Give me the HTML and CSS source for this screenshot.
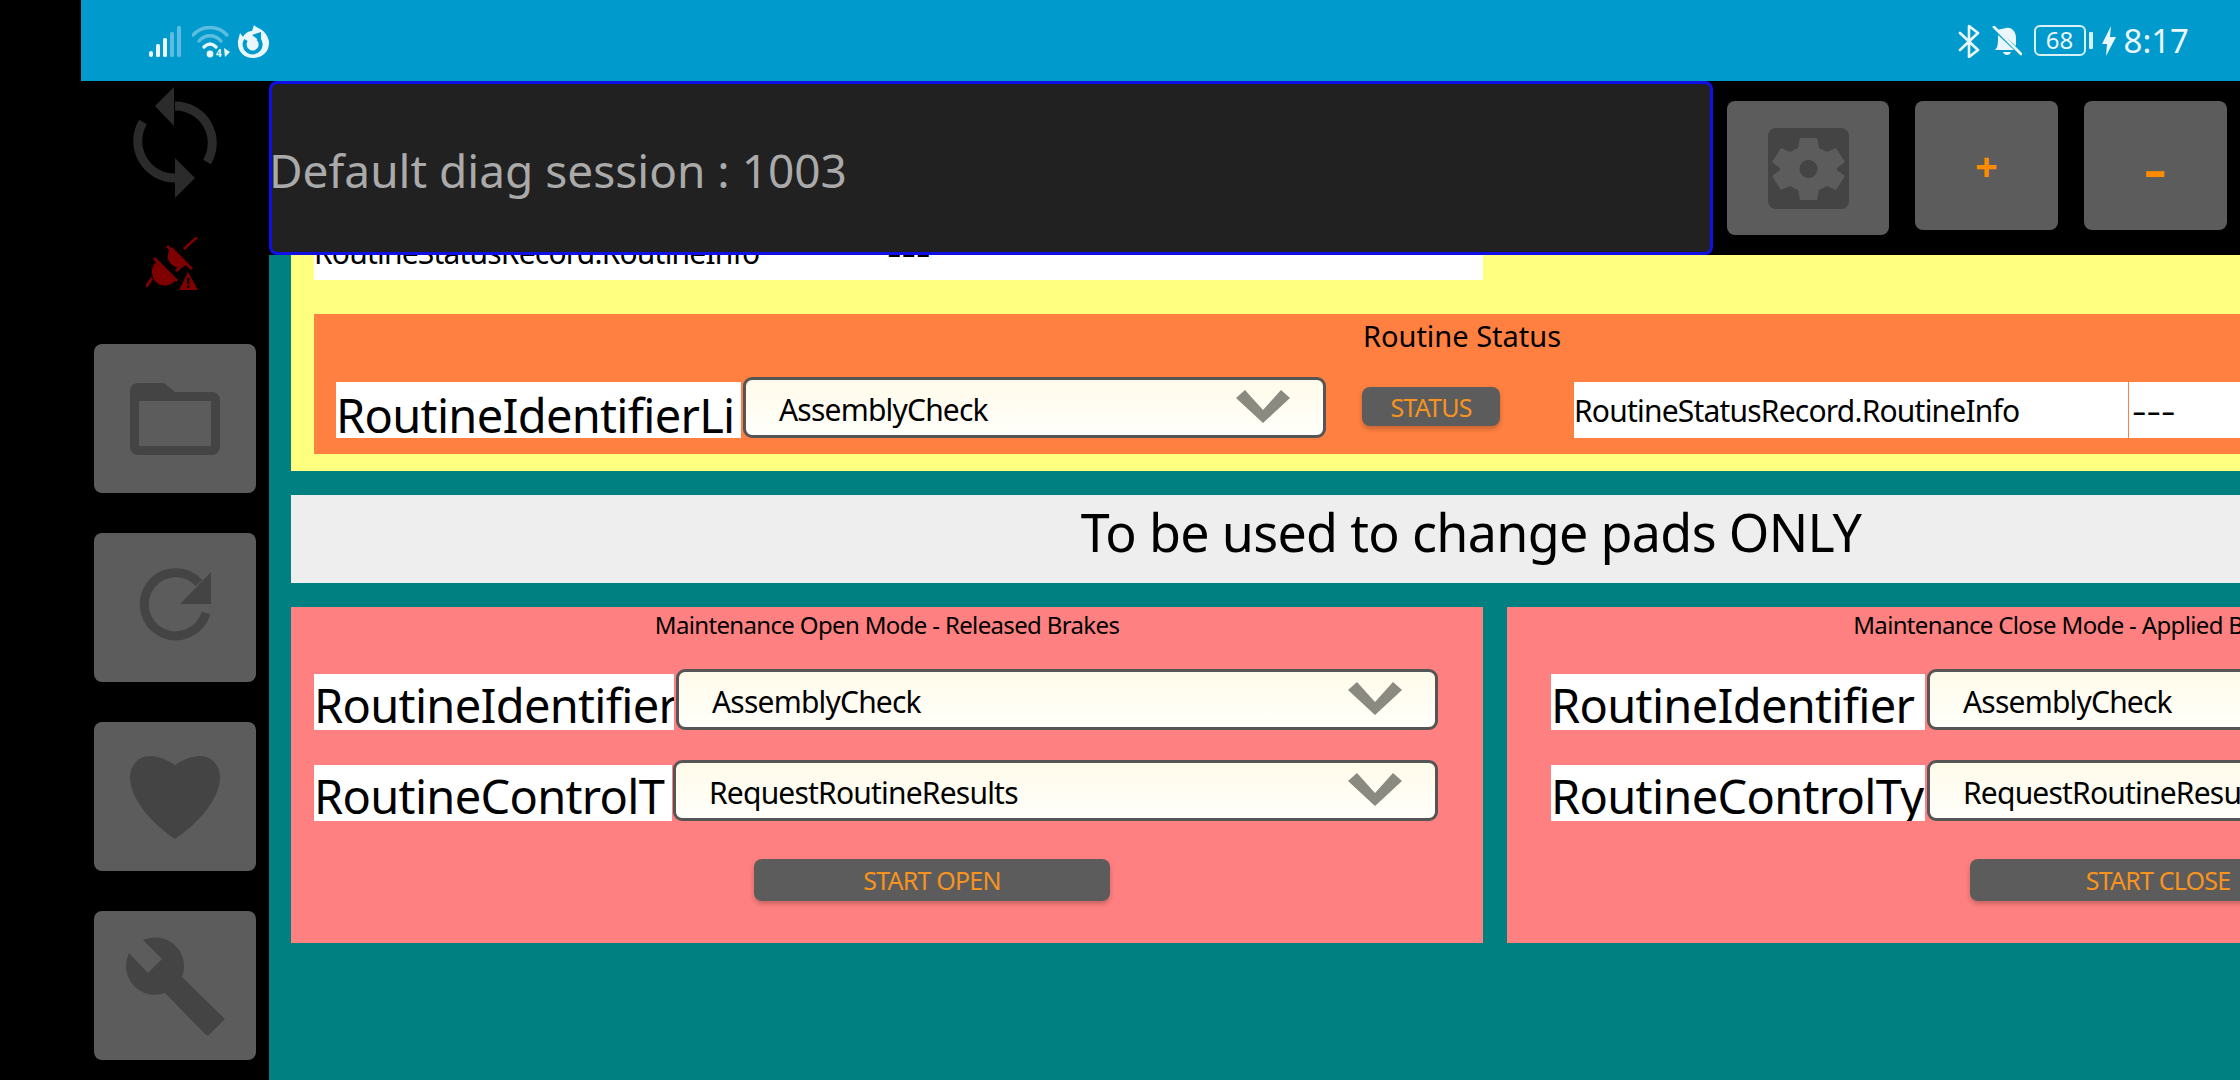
FILE: index.html
```html
<!DOCTYPE html>
<html lang="en">
<head>
<meta charset="utf-8">
<title>Diagnostics</title>
<link rel="stylesheet" href="styles.css">
</head>
<body>
<div class="app">
  <header class="statusbar">
    <div class="status-left">
      <svg class="ic-signal" viewBox="0 0 34 32"><g fill="#eaf8fd"><rect x="1" y="25" width="4" height="6" rx="2"/><rect x="8" y="18" width="4" height="13" rx="1.5"/><rect x="15" y="12" width="4" height="19" rx="1.5"/></g><g fill="#5cbde0"><rect x="22" y="6" width="4" height="25" rx="1.5"/><rect x="29" y="0" width="4" height="31" rx="1.5"/></g></svg>
      <svg class="ic-wifi" viewBox="0 0 38 32"><g fill="none" stroke-linecap="round" stroke-width="3.4"><path d="M1 9 C 10 -1, 26 -1, 35 9" stroke="#5cbde0"/><path d="M7 15 C 13 8, 23 8, 29 15" stroke="#5cbde0"/><path d="M12 21 C 16 17, 20 17, 24 21" stroke="#eaf8fd"/></g><circle cx="18" cy="28" r="3.4" fill="#eaf8fd"/><text x="24" y="31" class="wifi-four">4</text><polygon points="32,22 38,26 33,31" fill="#eaf8fd"/></svg>
      <svg class="ic-fox" viewBox="0 0 32 33"><path d="M1 16 L3 8 L6 12 C8 8 12 6 15 6 L17 0 C19 3 24 3 28 8 C31 12 32 15 32 18 C32 27 25 33 16 33 C7 33 0 26 1 16Z" fill="#eaf8fd"/><path d="M21 13.5 A8 8 0 1 1 9 15" fill="none" stroke="#009acd" stroke-width="4"/><polygon points="15,10 24,7 24,17" fill="#009acd"/></svg>
    </div>
    <div class="status-right">
      <svg class="ic-bt" viewBox="0 0 22 34"><path d="M2 9 L20 26 L11 33 V2 L20 9 L2 26" fill="none" stroke="#eaf8fd" stroke-width="2.6" stroke-linecap="round" stroke-linejoin="round"/></svg>
      <svg class="ic-bell" viewBox="0 0 30 30"><path d="M14 2 C20 1 24 6 24 12 V20 L5 4 Z M3 24 C6 21 6 18 6 9 L22 24 Z M11 26 H19 C18 30 12 30 11 26Z" fill="#eaf8fd"/><path d="M2 1 L29 28" stroke="#eaf8fd" stroke-width="2.8" stroke-linecap="round"/></svg>
      <div class="battery"><span class="battery-box">68</span><span class="battery-nub"></span></div>
      <svg class="ic-bolt" viewBox="0 0 14 30"><polygon points="9,0 0,18 5,18 4,30 14,11 8,11" fill="#eaf8fd"/></svg>
      <span class="clock">8:17</span>
    </div>
  </header>
  <div class="body-row">
    <aside class="sidebar">
      <svg class="ic-sync" viewBox="130 87 90 111"><g fill="none" stroke="#2b2b2b" stroke-width="9"><path d="M175 106 A37 37 0 0 1 207 162"/><path d="M175 178 A37 37 0 0 1 143 122"/></g><polygon points="174,87 174,126 155,106" fill="#2b2b2b"/><polygon points="175,158 195,178 175,198" fill="#2b2b2b"/></svg>
      <svg class="ic-plug" viewBox="0 0 52 53"><g fill="#7f0000"><path d="M26 10 L42 26 C36 32 29 31 25 27 C21 23 20 16 26 10Z"/><path d="M38 12 L51 0" stroke="#7f0000" stroke-width="2.5"/><path d="M21 9 L46 32" stroke="#7f0000" stroke-width="3"/><path d="M30 34 L38 27" stroke="#7f0000" stroke-width="3"/><path d="M10 25 L30 43 C24 50 15 50 10 45 C5 40 4 31 10 25Z"/><path d="M6 41 L0 50" stroke="#7f0000" stroke-width="3"/><path d="M8 21 L31 44" stroke="#7f0000" stroke-width="3"/><polygon points="42,35 52,53 33,53"/></g><rect x="41" y="41" width="2.4" height="6" fill="#000"/><rect x="41" y="48.5" width="2.4" height="2.4" fill="#000"/></svg>
      <div class="side-btn"><svg viewBox="0 0 162 149"><path fill-rule="evenodd" d="M44 39 H70 L81 48 H118 a8 8 0 0 1 8 8 V103 a8 8 0 0 1 -8 8 H44 a8 8 0 0 1 -8 -8 V47 a8 8 0 0 1 8 -8 Z M45 57 V102 H117 V57 Z"/></svg></div>
      <div class="side-btn"><svg viewBox="0 0 162 149"><path d="M105 50 A31.5 31.5 0 1 0 112 80" fill="none" stroke="#444" stroke-width="9"/><polygon points="117,39 117,71 86,71"/></svg></div>
      <div class="side-btn"><svg viewBox="0 0 162 149"><path d="M81 43 C72 37 62 34 56 34 C44 34 36 44 36 55 C36 78 60 103 81 117 C102 103 126 78 126 55 C126 44 118 34 106 34 C100 34 90 37 81 43Z"/></svg></div>
      <div class="side-btn"><svg viewBox="0 0 162 149"><path d="M49 29 A29 29 0 0 1 88 66 L131 108 L115 124 Q113 125 111 123 L71 82 A29 29 0 0 1 35 42 L54 62 L68 48 Z"/></svg></div>
    </aside>
    <main class="main">
      <div class="topbar">
        <div class="session">Default diag session : 1003</div>
        <div class="tools">
          <div class="tool tool-gear">
            <svg viewBox="0 0 81 81"><rect width="81" height="81" rx="8" fill="#444"/><path fill="#5c5c5c" fill-rule="evenodd" d="M32 10 H49 L51 20 L59 24 L68 20 L77 34 L69 40 L69 42 L77 48 L68 62 L59 58 L51 62 L49 72 H32 L30 62 L22 58 L13 62 L4 48 L12 42 L12 40 L4 34 L13 20 L22 24 L30 20 Z M40.5 32 A9 9 0 1 0 40.6 32 Z"/></svg>
          </div>
          <div class="tool tool-sign">+</div>
          <div class="tool tool-sign tool-minus"><span>-</span></div>
        </div>
      </div>
      <div class="content">
        <section class="yellow">
          <div class="record-strip">
            <div class="cell cell-name-top">RoutineStatusRecord.RoutineInfo</div>
            <div class="cell"><span class="dash">---</span></div>
          </div>
          <div class="orange">
            <div class="orange-title">Routine Status</div>
            <div class="orange-row">
              <div class="label label-list">RoutineIdentifierLi</div>
              <div class="dropdown dd-list"><span>AssemblyCheck</span><svg class="chev" viewBox="0 0 54 33"><polygon points="0,8 9,0 27,20 45,0 54,8 27,33"/></svg></div>
              <button class="btn btn-status">STATUS</button>
              <div class="record-cells">
                <div class="cell cell-name">RoutineStatusRecord.RoutineInfo</div>
                <div class="cell cell-value"><span class="dash">---</span></div>
              </div>
            </div>
          </div>
        </section>
        <section class="notice">To be used to change pads ONLY</section>
        <div class="pink-row">
          <section class="pink pink-open">
            <div class="pink-title">Maintenance Open Mode - Released Brakes</div>
            <div class="form-row">
              <div class="label label-a">RoutineIdentifier</div>
              <div class="dropdown dd-a"><span>AssemblyCheck</span><svg class="chev" viewBox="0 0 54 33"><polygon points="0,8 9,0 27,20 45,0 54,8 27,33"/></svg></div>
            </div>
            <div class="form-row">
              <div class="label label-b">RoutineControlT</div>
              <div class="dropdown dd-b"><span>RequestRoutineResults</span><svg class="chev" viewBox="0 0 54 33"><polygon points="0,8 9,0 27,20 45,0 54,8 27,33"/></svg></div>
            </div>
            <button class="btn btn-start btn-open">START OPEN</button>
          </section>
          <section class="pink pink-close">
            <div class="pink-title">Maintenance Close Mode - Applied Brakes</div>
            <div class="form-row">
              <div class="label label-c">RoutineIdentifier</div>
              <div class="dropdown dd-a"><span>AssemblyCheck</span><svg class="chev" viewBox="0 0 54 33"><polygon points="0,8 9,0 27,20 45,0 54,8 27,33"/></svg></div>
            </div>
            <div class="form-row">
              <div class="label label-c">RoutineControlTy</div>
              <div class="dropdown dd-a"><span>RequestRoutineResults</span><svg class="chev" viewBox="0 0 54 33"><polygon points="0,8 9,0 27,20 45,0 54,8 27,33"/></svg></div>
            </div>
            <button class="btn btn-start btn-close">START CLOSE</button>
          </section>
        </div>
      </div>
    </main>
  </div>
</div>
</body>
</html>
```
FILE: styles.css
```css
* { box-sizing: border-box; }
html, body { margin: 0; height: 100%; background: #000; overflow: hidden; }
body { font-family: "Noto Sans", sans-serif; color: #000; }
.app { width: 2240px; height: 1080px; display: flex; flex-direction: column; overflow: hidden; }

.statusbar { height: 81px; margin-left: 81px; flex: none; background: #009acd; display: flex; justify-content: space-between; align-items: center; padding: 0 51px 0 67px; }
.status-left, .status-right { display: flex; align-items: center; }
.ic-signal { width: 34px; height: 32px; margin-top: 2px; }
.ic-wifi { width: 38px; height: 32px; margin: 2px 0 0 10px; }
.wifi-four { font-size: 10px; font-weight: 700; fill: #eaf8fd; font-family: "Noto Sans", sans-serif; }
.ic-fox { width: 32px; height: 33px; margin: 1px 0 0 7px; }
.ic-bt { width: 22px; height: 34px; }
.ic-bell { width: 30px; height: 30px; margin-left: 12px; }
.battery { display: flex; align-items: center; margin-left: 12px; }
.battery-box { width: 52px; height: 31px; border: 2px solid #d6f1fa; border-radius: 6px; color: #eaf8fd; font-size: 24px; line-height: 26px; text-align: center; }
.battery-nub { width: 4px; height: 17px; margin-left: 3px; background: #d6f1fa; border-radius: 1px; }
.ic-bolt { width: 14px; height: 30px; margin-left: 9px; }
.clock { color: #eaf8fd; font-size: 33px; line-height: 40px; margin-left: 8px; }

.body-row { flex: 1; display: flex; min-height: 0; }
.sidebar { width: 269px; flex: none; padding: 6px 0 0 94px; display: flex; flex-direction: column; align-items: flex-start; }
.ic-sync { width: 90px; height: 111px; margin-left: 36px; flex: none; }
.ic-plug { width: 52px; height: 53px; margin: 39px 0 54px 52px; flex: none; }
.side-btn { width: 162px; height: 149px; flex: none; background: #5c5c5c; border-radius: 8px; margin-bottom: 40px; }
.side-btn svg { display: block; width: 162px; height: 149px; fill: #444; }

.main { flex: 1; min-width: 0; display: flex; flex-direction: column; }
.topbar { height: 174px; flex: none; display: flex; position: relative; z-index: 1; }
.session { width: 1444px; background: #212121; border: 3px solid #1010e6; border-radius: 8px; color: #aaa; font-size: 46px; display: flex; align-items: center; padding-top: 4px; text-indent: -3px; }
.tools { display: flex; align-items: flex-start; padding: 20px 0 0 14px; }
.tool { background: #5c5c5c; border-radius: 8px; display: flex; align-items: center; justify-content: center; }
.tool-gear { width: 162px; height: 134px; }
.tool-gear svg { width: 81px; height: 81px; }
.tool-sign { width: 143px; height: 129px; margin-left: 26px; color: #ff8c00; font-size: 40px; font-weight: 700; }
.tool-minus { font-size: 46px; }
.tool-minus span { display: inline-block; padding-top: 6px; transform: scaleX(1.5); }

.content { flex: 1; min-height: 0; background: #008080; padding-left: 22px; overflow: hidden; }
.yellow { width: 2400px; margin-top: -31px; background: #ffff80; padding: 0 0 17px 23px; }
.record-strip { width: 1169px; height: 56px; display: flex; background: #fff; }
.cell { height: 56px; background: #fff; font-size: 30px; line-height: 58px; letter-spacing: -.8px; white-space: nowrap; }
.dash { display: inline-block; letter-spacing: 0; transform: scaleX(1.5); transform-origin: left center; }
.cell-name-top { width: 573px; }
.orange { width: 2296px; height: 140px; margin-top: 34px; background: #ff8040; }
.orange-title { height: 63px; font-size: 29px; line-height: 44px; text-align: center; }
.orange-row { display: flex; align-items: flex-end; padding-left: 22px; }
.label { height: 56px; flex: none; background: #fff; font-size: 47px; line-height: 63px; letter-spacing: -.7px; white-space: nowrap; overflow: hidden; }
.label-list { width: 405px; line-height: 66px; }
.label-a { width: 360px; }
.label-b { width: 358px; }
.label-c { width: 374px; }
.dropdown { height: 61px; flex: none; display: flex; align-items: center; padding: 3px 33px 0; background: linear-gradient(#fffbea, #fffffa); border: 3px solid #555; border-radius: 9px; font-size: 30px; letter-spacing: -.8px; margin-left: 2px; }
.dd-list { width: 583px; }
.dd-a { width: 762px; }
.dd-b { width: 765px; margin-left: 1px; }
.chev { width: 54px; height: 33px; margin: 0 0 5px auto; fill: #8a8a80; flex: none; }
.btn { display: block; border: 0; padding: 0; background: #5c5c5c; color: #f7931e; font-family: inherit; border-radius: 8px; font-size: 25px; letter-spacing: -.8px; box-shadow: 0 3px 5px rgba(0,0,0,.22); }
.btn-status { width: 138px; height: 39px; margin: 0 74px 12px 36px; flex: none; }
.record-cells { display: flex; flex: none; }
.cell-name { width: 554px; }
.cell-value { width: 200px; margin-left: 1px; padding-left: 3px; }

.notice { width: 2360px; height: 88px; margin-top: 24px; background: #eee; font-size: 52px; line-height: 74px; letter-spacing: -.67px; text-align: center; }
.pink-row { display: flex; gap: 24px; margin-top: 24px; }
.pink { height: 336px; flex: none; background: #ff8080; }
.pink-open { width: 1192px; padding-left: 23px; }
.pink-close { width: 1140px; padding-left: 44px; }
.pink-title { height: 62px; font-size: 24px; line-height: 36px; letter-spacing: -.65px; text-align: center; white-space: nowrap; }
.pink-open .pink-title { margin-left: -23px; }
.pink-close .pink-title { margin-left: -44px; }
.form-row { display: flex; align-items: flex-end; height: 61px; margin-bottom: 30px; }
.btn-start { height: 42px; margin-top: 38px; }
.btn-open { width: 356px; margin-left: 440px; }
.btn-close { width: 376px; margin-left: 419px; }
```
